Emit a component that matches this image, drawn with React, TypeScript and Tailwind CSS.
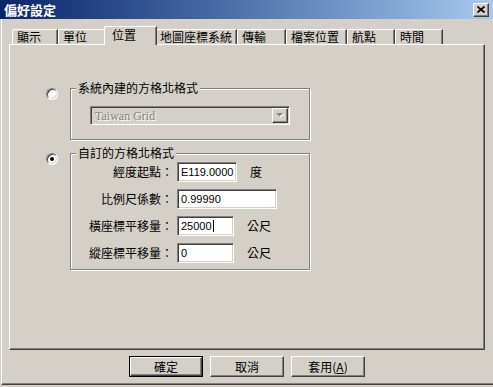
import React from "react";

const face = "font-['Noto_Sans_CJK_TC','Liberation_Sans',sans-serif]";

const tabs = [
  { label: "顯示", w: "w-[46px]" },
  { label: "單位", w: "w-[48px]" },
  { label: "位置", w: "w-[53px]", active: true },
  { label: "地圖座標系統", w: "w-[82px]" },
  { label: "傳輸", w: "w-[49px]" },
  { label: "檔案位置", w: "w-[61px]" },
  { label: "航點", w: "w-[48px]" },
  { label: "時間", w: "w-[48px]" },
];

const sunken =
  "border border-t-[#808080] border-l-[#808080] border-r-white border-b-white shadow-[inset_1px_1px_0_#404040,inset_-1px_-1px_0_#d4d0c8]";

function Radio({ checked }: { checked?: boolean }) {
  return (
    <div
      className={`mt-[7px] flex h-[12px] w-[12px] shrink-0 items-center justify-center rounded-full bg-white ${sunken}`}
    >
      {checked && <div className="h-[4px] w-[4px] rounded-full bg-black" />}
    </div>
  );
}

function Field({
  label,
  value,
  w,
  unit,
  caret,
}: {
  label: string;
  value: string;
  w: string;
  unit?: string;
  caret?: boolean;
}) {
  return (
    <div className="flex h-[20px] items-center">
      <div className="w-[97px] text-right text-[12px] leading-[14px]">{label}</div>
      <div
        className={`ml-[4px] flex h-[20px] ${w} items-center bg-white pl-[3px] font-['Liberation_Sans',sans-serif] text-[11px] ${sunken}`}
      >
        {value}
        {caret && <span className="ml-[1px] h-[12px] w-[1px] bg-black" />}
      </div>
      {unit && <div className="ml-[13px] text-[12px] leading-[14px]">{unit}</div>}
    </div>
  );
}

function Button({ children, primary }: { children: React.ReactNode; primary?: boolean }) {
  return (
    <div className={`h-[21px] w-[74px] ${primary ? "border border-black" : ""}`}>
      <div className="flex h-full w-full items-center justify-center border border-t-white border-l-white border-r-[#404040] border-b-[#404040] text-[12px] leading-[14px] shadow-[inset_-1px_-1px_0_#808080]">
        {children}
      </div>
    </div>
  );
}

export default function App() {
  return (
    <div className={`flex h-[387px] w-[493px] flex-col overflow-hidden bg-[#d4d0c8] text-black ${face}`}>
      <div className="flex h-[19px] shrink-0 items-center justify-between bg-gradient-to-r from-[#0a246a] to-[#a6caf0] pl-[4px] pr-[4px]">
        <span className="text-[13px] font-bold leading-[14px] text-white">偏好設定</span>
        <div className="flex h-[14px] w-[16px] items-center justify-center border border-t-white border-l-white border-r-[#404040] border-b-[#404040] bg-[#d4d0c8] shadow-[inset_-1px_-1px_0_#808080]">
          <svg width="8" height="7" viewBox="0 0 8 7">
            <path d="M0.5 0.5L7.5 6.5M7.5 0.5L0.5 6.5" stroke="#000" strokeWidth="1.7" />
          </svg>
        </div>
      </div>

      <div className="ml-[1px] flex h-[366px] flex-col border-b border-l border-b-[#404040] border-l-white shadow-[inset_0_-1px_0_#808080]">
        <div className="mt-[7px] flex h-[18px] items-end pl-[10px]">
          {tabs.map((t) =>
            t.active ? (
              <div
                key={t.label}
                className={`relative z-10 -mx-[2px] -mb-[1px] flex h-[19px] ${t.w} items-start rounded-tl-[2px] border-l border-r border-t border-l-white border-r-[#404040] border-t-white bg-[#d4d0c8] pl-[7px] pt-[1px] text-[12px] leading-[14px] shadow-[inset_-1px_0_0_#808080]`}
              >
                {t.label}
              </div>
            ) : (
              <div
                key={t.label}
                className={`flex h-[15px] ${t.w} items-center rounded-tl-[2px] border-l border-r border-t border-l-white border-r-[#404040] border-t-white pl-[4px] text-[12px] leading-[14px] shadow-[inset_-1px_0_0_#808080]`}
              >
                {t.label}
              </div>
            )
          )}
        </div>

        <div className="ml-[7px] flex h-[306px] w-[476px] flex-col border border-t-white border-l-white border-r-[#404040] border-b-[#404040] pl-[36px] pt-[36px] shadow-[inset_-1px_-1px_0_#808080]">
          <div className="flex items-start gap-[12px]">
            <Radio />
            <fieldset className="w-[240px] border border-[#808080] pb-[14px] pl-[5px] pt-[11px] shadow-[inset_1px_1px_0_#fff,1px_1px_0_#fff]">
              <legend className="bg-[#d4d0c8] px-[2px] text-[12px] leading-[14px]">系統內建的方格北格式</legend>
              <div className={`ml-[14px] flex h-[19px] w-[200px] items-center justify-between bg-[#d4d0c8] ${sunken}`}>
                <span className="pl-[4px] font-['Liberation_Serif',serif] text-[12px] leading-[14px] text-[#808080] [text-shadow:1px_1px_0_#fff]">
                  Taiwan Grid
                </span>
                <div className="mr-[1px] flex h-[15px] w-[16px] items-center justify-center border border-t-white border-l-white border-r-[#404040] border-b-[#404040] bg-[#d4d0c8] shadow-[inset_-1px_-1px_0_#808080]">
                  <svg width="8" height="5" viewBox="0 0 8 5">
                    <path d="M1 1H8L4.5 4.5Z" fill="#fff" />
                    <path d="M0 0H7L3.5 3.5Z" fill="#808080" />
                  </svg>
                </div>
              </div>
            </fieldset>
          </div>

          <div className="mt-[6px] flex items-start gap-[12px]">
            <Radio checked />
            <fieldset className="w-[240px] border border-[#808080] pb-[6px] pl-[5px] pt-[2px] shadow-[inset_1px_1px_0_#fff,1px_1px_0_#fff]">
              <legend className="bg-[#d4d0c8] px-[2px] text-[12px] leading-[14px]">自訂的方格北格式</legend>
              <div className="flex flex-col gap-[7px]">
                <Field label="經度起點：" value="E119.0000" w="w-[60px]" unit="度" />
                <Field label="比例尺係數：" value="0.99990" w="w-[100px]" />
                <Field label="橫座標平移量：" value="25000" w="w-[57px]" unit="公尺" caret />
                <Field label="縱座標平移量：" value="0" w="w-[57px]" unit="公尺" />
              </div>
            </fieldset>
          </div>
        </div>

        <div className="mt-[6px] flex gap-[7px] pl-[127px]">
          <Button primary>確定</Button>
          <Button>取消</Button>
          <Button>
            套用(<span className="underline">A</span>)
          </Button>
        </div>
      </div>
    </div>
  );
}
